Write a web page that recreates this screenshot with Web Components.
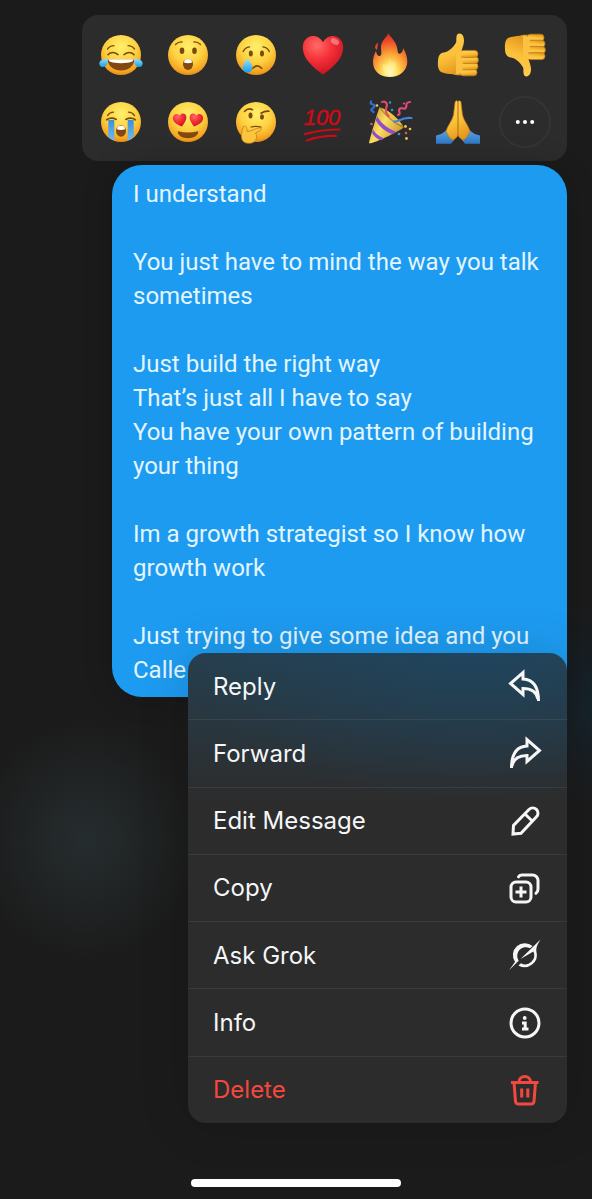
<!DOCTYPE html>
<html lang="en">
<head>
<meta charset="utf-8">
<meta name="viewport" content="width=device-width, initial-scale=1">
<title>Message actions</title>
<style>
	html {
		background: #1b1b1b;
	}

	body {
		margin: 0;
	}
</style>
</head>
<body>

<message-screen>
	<reaction-bar slot="reactions">
		<reaction-button name="joy" label="Tears of joy"></reaction-button>
		<reaction-button name="wow" label="Astonished"></reaction-button>
		<reaction-button name="cry" label="Crying"></reaction-button>
		<reaction-button name="heart" label="Heart"></reaction-button>
		<reaction-button name="fire" label="Fire"></reaction-button>
		<reaction-button name="up" label="Thumbs up"></reaction-button>
		<reaction-button name="down" label="Thumbs down"></reaction-button>
		<reaction-button name="sob" label="Sobbing"></reaction-button>
		<reaction-button name="love" label="Heart eyes"></reaction-button>
		<reaction-button name="think" label="Thinking"></reaction-button>
		<reaction-button name="hundred" label="Hundred points"></reaction-button>
		<reaction-button name="party" label="Party popper"></reaction-button>
		<reaction-button name="pray" label="Folded hands"></reaction-button>
		<reaction-button name="more" label="More reactions"></reaction-button>
	</reaction-bar>

	<message-bubble>
		<p>I understand</p>
		<p>You just have to mind the way you talk sometimes</p>
		<p>Just build the right way<br>That’s just all I have to say<br>You have your own pattern of building your thing</p>
		<p>Im a growth strategist so I know how growth work</p>
		<p>Just trying to give some idea and you<br>Calle</p>
	</message-bubble>

	<action-menu slot="menu">
		<action-item icon="reply">Reply</action-item>
		<action-item icon="forward">Forward</action-item>
		<action-item icon="edit">Edit Message</action-item>
		<action-item icon="copy">Copy</action-item>
		<action-item icon="grok">Ask Grok</action-item>
		<action-item icon="info">Info</action-item>
		<action-item icon="trash" danger>Delete</action-item>
	</action-menu>
</message-screen>

<script>
/* every emoji is drawn on a 44 x 44 grid */
const defs = `
	<defs>
		<radialGradient id="face" cx=".5" cy=".3" r=".72">
			<stop offset="0" stop-color="#fff06c"/>
			<stop offset=".55" stop-color="#fdd03f"/>
			<stop offset=".85" stop-color="#f5a623"/>
			<stop offset="1" stop-color="#e08a16"/>
		</radialGradient>
		<linearGradient id="tear" x1="0" y1="0" x2="0" y2="1">
			<stop offset="0" stop-color="#9be4ff"/>
			<stop offset="1" stop-color="#1e9be2"/>
		</linearGradient>
		<linearGradient id="stream" x1="0" y1="0" x2="0" y2="1">
			<stop offset="0" stop-color="#3a8fda"/>
			<stop offset="1" stop-color="#6cbcf5"/>
		</linearGradient>
		<radialGradient id="heart" cx=".35" cy=".25" r=".8">
			<stop offset="0" stop-color="#ff6b66"/>
			<stop offset=".45" stop-color="#f5333a"/>
			<stop offset="1" stop-color="#c8101f"/>
		</radialGradient>
		<radialGradient id="flame" cx=".5" cy=".9" r=".85">
			<stop offset="0" stop-color="#fffbd0"/>
			<stop offset=".25" stop-color="#ffe160"/>
			<stop offset=".55" stop-color="#fb9a33"/>
			<stop offset=".85" stop-color="#ee4b2b"/>
			<stop offset="1" stop-color="#e23425"/>
		</radialGradient>
		<linearGradient id="skin" x1="0" y1="0" x2=".3" y2="1">
			<stop offset="0" stop-color="#ffd357"/>
			<stop offset=".6" stop-color="#fbc039"/>
			<stop offset="1" stop-color="#e79a20"/>
		</linearGradient>
		<linearGradient id="cone" x1="0" y1="0" x2="1" y2=".6">
			<stop offset="0" stop-color="#b98a22"/>
			<stop offset=".5" stop-color="#ffdf66"/>
			<stop offset="1" stop-color="#c9962b"/>
		</linearGradient>
		<linearGradient id="sleeve" x1="0" y1="0" x2="0" y2="1">
			<stop offset="0" stop-color="#5aa2e4"/>
			<stop offset="1" stop-color="#2f78c4"/>
		</linearGradient>
	</defs>`;

const face = '<circle cx="22" cy="22" r="20" fill="url(#face)"/>';

const brown = 'fill="none" stroke="#7a4a0c" stroke-linecap="round"';

const hand = `
	<path fill="url(#skin)" d="M8 19.5C13 18.5 18 14 20.3 9 20.5 5 20 1 23 .6 26.6 .4 28 4 28 8 28 12 26 15 25.5 18.5L31 40C28 42.6 21 43 17 41.3 13 40.6 9 41 5 39 2 37 1.6 32 2 28 2 23 4 20 8 19.5Z"/>
	<g fill="url(#skin)" stroke="#b9791b" stroke-width=".8">
		<rect x="24" y="36" width="17" height="6.8" rx="3.4"/>
		<rect x="24" y="29.8" width="18" height="7" rx="3.5"/>
		<rect x="24" y="23.6" width="18.4" height="7" rx="3.5"/>
		<rect x="24" y="17.4" width="18" height="7" rx="3.5"/>
	</g>
	<path fill="#fac240" d="M20 18h7c-2 4-2 8 0 11-1 4-1 8 1 11l-8 1z"/>`;

const emoji = {
	joy: `${face}
		<path ${brown} stroke-width="1.6" d="M9 21.6q4.5-4.2 10 0M25 21.6q5.5-4.2 10 0"/>
		<path ${brown} stroke-width="1.3" d="M8.5 16q2.5-3.4 6.5-3.4M35.5 16q-2.5-3.4-6.5-3.4"/>
		<path fill="#83480f" d="M8.7 26.3h26.6c0 7-6 11.2-13.3 11.2S8.7 33.3 8.7 26.3z"/>
		<path fill="#fff" d="M9.5 26.3h25c.3 2.3-3 3.9-12.5 3.9S9.2 28.6 9.5 26.3z"/>
		<path fill="url(#tear)" d="M8.8 25c.8 4.5-.8 8.5-4.5 9-3.4.3-4.6-2.6-3.6-5 1.3-2.7 5-2.3 8.1-4z"/>
		<path fill="url(#tear)" d="M35.2 25c-.8 4.5.8 8.5 4.5 9 3.4.3 4.6-2.6 3.6-5-1.3-2.7-5-2.3-8.1-4z"/>`,
	wow: `${face}
		<ellipse cx="16" cy="17.8" rx="2.3" ry="3.3" fill="#7a4a0c"/>
		<ellipse cx="28.5" cy="17.8" rx="2.3" ry="3.3" fill="#7a4a0c"/>
		<path ${brown} stroke-width="1.3" d="M9.5 11.5q3-2.8 6.5-2.5M34.5 11.5q-3-2.8-6.5-2.5"/>
		<ellipse cx="22" cy="31.3" rx="5" ry="5.6" fill="#83480f"/>
		<path fill="#fff" d="M18 29.5q0-3.4 4-3.4t4 3.4q-4 1.6-8 0z"/>`,
	cry: `${face}
		<ellipse cx="16.8" cy="20.6" rx="2" ry="3" fill="#7a4a0c"/>
		<ellipse cx="28" cy="20.6" rx="2" ry="3" fill="#7a4a0c"/>
		<path ${brown} stroke-width="1.4" d="M9.2 18.5q2-4.2 6.3-4.6M35.3 18.5q-2-4.2-6.3-4.6"/>
		<path ${brown} stroke-width="1.7" d="M18.8 35.3q4.4-4.8 8.8 0"/>
		<path fill="url(#tear)" d="M13.5 25c2 3.7 5 6 5 9.6a5 5 0 0 1-10 0c0-3.6 3.4-6 5-9.6z"/>`,
	heart: `
		<path fill="url(#heart)" d="M22 41.5C12 34.5 1.8 25.8 1.8 14.5 1.8 7.5 6.5 3 12 3c4.5 0 8 2.6 10 6.2C24 5.6 27.5 3 32 3c5.5 0 10.2 4.5 10.2 11.5C42.2 25.8 32 34.5 22 41.5z"/>
		<ellipse cx="34" cy="8.5" rx="4.5" ry="2.8" fill="#fff" opacity=".35" transform="rotate(30 34 8.5)"/>`,
	fire: `
		<path fill="url(#flame)" d="M20.3 .5C23 5 29 9 29.5 17c.2 3.5 1.5 4.2 2.8 3.4 2-1.2 2.9-3 2.7-5.4C38 19 39.3 24 39.3 29 39 38 31 44 22 44 12 44 5 38 5 29c0-4 1-8 3-11 .4 3 1.8 5.2 3.7 5 2.6-.6 1.3-5 1.3-9C13 8 18 5 20.3 .5z"/>
		<path fill="#e8432a" d="M10.3 9.5c-3.8 2.5-4 5.5-1.6 7.5 1.5-2 .4-4.5 1.6-7.5z"/>
		<path fill="#fff6a8" opacity=".4" d="M22 25c1 5 3 5 5 3 2 6 1 14-5 14s-9-5-7-11c2 2 6-1 7-6z"/>`,
	up: hand,
	down: `<g transform="matrix(1 0 0 -1 0 44)">${hand}</g>`,
	sob: `${face}
		<path fill="url(#stream)" d="M9.3 20h6v20.5q-3.5-1.3-6-3.8zM28.7 20h6v16.7q-2.5 2.5-6 3.8z"/>
		<path ${brown} stroke-width="1.7" d="M7.6 19.8q4.6-3 9.6-.4M26.8 19.4q5-2.6 9.6.4"/>
		<path ${brown} stroke-width="1.3" d="M8.5 15.6q2.3-3.3 6-3.4M35.5 15.6q-2.3-3.3-6-3.4"/>
		<ellipse cx="22" cy="31" rx="5" ry="5.8" fill="#83480f"/>
		<path fill="#fff" d="M18 29.2q0-3.4 4-3.4t4 3.4q-4 1.6-8 0z"/>`,
	love: `${face}
		<path fill="url(#heart)" d="M16 26.5C10.5 24.5 6 21.5 7 17c.9-3.6 5-3.8 6.7-1.2 1-3 5.6-3.3 6.5.2.8 4-2 7-4.2 10.5z"/>
		<path fill="url(#heart)" d="M28 26.5c5.5-2 10-5 9-9.5-.9-3.6-5-3.8-6.7-1.2-1-3-5.6-3.3-6.5.2-.8 4 2 7 4.2 10.5z"/>
		<path fill="#83480f" d="M11.8 31.3q10.2 2.6 20.4 0c.7 3.7-4.2 7-10.2 7s-10.9-3.3-10.2-7z"/>`,
	think: `${face}
		<ellipse cx="16.5" cy="15.5" rx="2" ry="2.9" fill="#7a4a0c"/>
		<ellipse cx="28" cy="17" rx="2" ry="2.7" fill="#7a4a0c"/>
		<path ${brown} stroke-width="1.6" d="M10.5 11.5q3.5-4 8-1.8M27 13.2q4-2.4 8-2"/>
		<path ${brown} stroke-width="1.3" d="M17 27q5-1.5 10 .2"/>
		<path fill="#fbc53f" stroke="#c57f18" stroke-width=".8" d="M9.5 26.5c1.5-1 3 0 3.2 2l.6 3c4-.3 8-3.2 12.4-3.7 2.2 0 2.3 2 .3 2.9l-4.5 2.3c2.5 3 1 9.5-5 10.2-5.5.5-8.7-1.7-9-6-.2-4 .6-7.5 2-10.7z"/>`,
	hundred: `
		<text x="21" y="25" text-anchor="middle" font-family="Liberation Sans, sans-serif" font-size="22" font-style="italic" fill="#cf0a14" stroke="#cf0a14" stroke-width=".5">100</text>
		<path fill="none" stroke="#cf0a14" stroke-width="2.2" stroke-linecap="round" d="M4 34q17-4.5 34.5-4.5M6 40.5q14-5 29-4.5"/>`,
	party: `
		<path fill="url(#cone)" d="M1 43.2C.5 42.5 10.5 9 11.5 7.5c5-1 24 15 24 20C34.5 29.5 3.5 45 1 43.2z"/>
		<path fill="#8e4fc9" d="M9 16.5q7 11 19.5 15.5l-4 2.3Q13 30 7.8 20.5zM5 29.5q4 6.5 11.5 9l-3.5 1.7Q6.5 38 4 33z"/>
		<path fill="#8a6312" opacity=".6" d="M11.5 7.5c5-1 24 15 24 20-7-2-20-12-24-20z"/>
		<path fill="#f5cf55" opacity=".8" d="M13.5 8.5c5 0 18 11 20.5 17-7-3-16-10-20.5-17z"/>
		<g fill="none" stroke-linecap="round" stroke-width="2.2">
			<path stroke="#2f6fd0" d="M3 1.5c-2 4 5 2 3.5 5s-6 2-1 5.5"/>
			<path stroke="#e0485f" d="M14 2c3-1 6 1 4.5 5s-1 6 2 9"/>
			<path stroke="#e04a78" d="M30 15c4-1-1-5 2-6.5s5 2 6-1-1-5 4-5.5"/>
			<path stroke="#3f84e0" d="M26 21.5c4 1 8-5 17.5-3.5"/>
		</g>
		<g fill="#e7516b"><circle cx="3.5" cy="24" r="1.3"/><circle cx="36" cy="3.5" r="1.1"/><circle cx="38" cy="33" r="1.3"/></g>
		<g fill="#f3c64b"><circle cx="9" cy="5.5" r="1.3"/><circle cx="37.5" cy="26.5" r="1.4"/><circle cx="42" cy="29" r="1.3"/><circle cx="38.5" cy="38.5" r="1.4"/></g>
		<g fill="#3f8ee0"><circle cx="22" cy="2.5" r="1.2"/><circle cx="24" cy="10" r="1.3"/><circle cx="31" cy="34" r="1.3"/></g>`,
	pray: `
		<path fill="url(#sleeve)" d="M0 35.5Q6 34.5 10.5 30L18 40l-3 3.7H0zM44 35.5Q38 34.5 33.5 30L26 40l3 3.7h15z"/>
		<path fill="url(#skin)" stroke="#b87616" stroke-width=".7" d="M22 2C21.5.3 19.3.3 19 2.5L17.5 15C16 21 12 25 10 31q2 6.5 7 9.3C19 38.5 21 38 22 35zM22 2C22.5.3 24.7.3 25 2.5L26.5 15C28 21 32 25 34 31q-2 6.5-7 9.3C25 38.5 23 38 22 35z"/>`,
	more: `
		<g fill="#fff"><circle cx="14.8" cy="22" r="2"/><circle cx="22" cy="22" r="2"/><circle cx="29.2" cy="22" r="2"/></g>`
};

/* menu icons, 36 x 36 grid */
const icons = {
	reply: '<path d="M31.5 33C31.5 19 26 11.5 16 11V4.5L3.5 15.5 16 26.5V20.5C24.5 20.5 29.5 23.5 31 31"/>',
	forward: '<path d="M4.5 33C4.5 19 10 11.5 20 11V4.5L32.5 15.5 20 26.5V20.5C11.5 20.5 6.5 23.5 5 31"/>',
	edit: '<path d="M6 31l.5-8.5L22 6.5a5.2 5.2 0 0 1 7.5 7.3L14 30.2zM18 11l7.5 7.3"/>',
	copy: '<rect x="4" y="12" width="20" height="20" rx="5"/><path stroke-linecap="round" d="M11.5 6.8C12.3 5.6 13.6 5 15 5h10.5A5.5 5.5 0 0 1 31 10.5V19c0 1.8-.8 3.5-2 4.3"/><path d="M14 16.5v11M8.5 22h11"/>',
	grok: '<g fill="currentColor" stroke="none"><path d="M25.6 9A12 12 0 0 0 8 25L2 33.2l9.7-9.4A8.7 8.7 0 0 1 23 11.2z"/><path d="M33.5 2.5L13.5 22 26.4 14.500A9 9 0 0 1 14 26.200L11.400 28.400A12.200 12.200 0 0 0 29.400 14.600C29 11 30 8 33.500 2.500z"/></g>',
	info: '<circle cx="18" cy="18" r="14"/><path d="M15 18h3.2v6.5M15 24h6.5"/><circle cx="17.7" cy="13" r="1.9" fill="currentColor" stroke="none"/>',
	trash: '<path d="M4 10.5h27.5M12 10C12 2.5 23.5 2.5 23.5 10M7 10.5l1.5 18.8Q8.8 32 11.5 32H24q2.7 0 3-2.7l1.5-18.8M14.7 16.5v9M20.8 16.5v9"/>'
};

class MessageScreen extends HTMLElement {
	constructor() {
		super();
		this.attachShadow({mode: 'open'});
		this.shadowRoot.innerHTML = `
			<style>
			:host {
				background:
					radial-gradient(ellipse 110px 120px at 85px 840px, #262d2f, transparent),
					radial-gradient(ellipse 50px 100px at 100% 705px, #15232c, transparent),
					#1b1b1b;
				box-sizing: border-box;
				display: flex;
				flex-direction: column;
				font-family: Roboto, "Liberation Sans", sans-serif;
				gap: 4px;
				min-height: 100vh;
				padding: 15px 25px 12px;
			}

			main {
				display: flex;
				flex-direction: column;
				margin-left: 87px;
			}

			.reactions {
				margin-left: 57px;
			}

			/* the menu rides up over the end of the bubble */
			.menu {
				margin: -44px 0 0 76px;
				position: relative;
			}

			.home {
				align-self: center;
				background: #fff;
				border-radius: 4px;
				height: 8px;
				margin-top: auto;
				width: 210px;
			}
			</style>
			<div class="reactions"><slot name="reactions"></slot></div>
			<main>
				<slot></slot>
				<div class="menu"><slot name="menu"></slot></div>
			</main>
			<div class="home"></div>
		`;
	}
}

class ReactionBar extends HTMLElement {
	constructor() {
		super();
		this.attachShadow({mode: 'open'});
		this.shadowRoot.innerHTML = `
			<style>
			:host {
				background: #2c2c2d;
				border-radius: 16px;
				display: grid;
				grid-template-columns: repeat(7, 52px);
				justify-content: space-between;
				padding: 14px 16px 13px 13px;
				row-gap: 15px;
			}
			</style>
			<slot></slot>
		`;
	}
}

class ReactionButton extends HTMLElement {
	constructor() {
		super();
		this.attachShadow({mode: 'open'});
	}

	connectedCallback() {
		const name = this.getAttribute('name');
		this.shadowRoot.innerHTML = `
			<style>
			:host {
				display: block;
			}

			button {
				align-items: center;
				background: none;
				border: 0;
				border-radius: 50%;
				box-sizing: border-box;
				display: flex;
				height: 52px;
				justify-content: center;
				padding: 0;
				width: 52px;
			}

			button.more {
				border: 2px solid #343435;
			}

			svg {
				flex: none;
				height: 44px;
				overflow: visible;
				width: 44px;
			}
			</style>
			<button type="button" class="${name}" aria-label="${this.getAttribute('label')}">
				<svg viewBox="0 0 44 44" aria-hidden="true">${defs}${emoji[name]}</svg>
			</button>
		`;
	}
}

class MessageBubble extends HTMLElement {
	constructor() {
		super();
		this.attachShadow({mode: 'open'});
		this.shadowRoot.innerHTML = `
			<style>
			:host {
				background: #1d9bf0;
				border-radius: 30px;
				box-shadow: 0 0 30px rgba(0, 0, 0, .2);
				color: #e3f5ff;
				display: flex;
				flex-direction: column;
				font-size: 24px;
				gap: 34px;
				line-height: 34px;
				padding: 12px 21px 10px;
			}

			::slotted(p) {
				margin: 0;
			}
			</style>
			<slot></slot>
		`;
	}
}

class ActionMenu extends HTMLElement {
	constructor() {
		super();
		this.attachShadow({mode: 'open'});
		this.shadowRoot.innerHTML = `
			<style>
			:host {
				background:
					radial-gradient(ellipse 300px 150px at 75% 0, rgba(25, 75, 110, .5), transparent),
					linear-gradient(rgba(35, 75, 100, .6), transparent 150px),
					#2c2c2c;
				border-radius: 18px;
				box-shadow: 0 0 50px rgba(0, 0, 0, .15);
				display: flex;
				flex-direction: column;
				font-family: Inter, "Liberation Sans", sans-serif;
				font-size: 24px;
				min-height: 470px;
				overflow: hidden;
			}
			</style>
			<slot></slot>
		`;
	}
}

class ActionItem extends HTMLElement {
	constructor() {
		super();
		this.attachShadow({mode: 'open'});
	}

	connectedCallback() {
		this.shadowRoot.innerHTML = `
			<style>
			:host {
				color: #f5f6f7;
				display: flex;
				flex: 1;
			}

			:host([danger]) {
				color: #f4483f;
			}

			:host(:not(:first-child)) {
				border-top: 1px solid rgba(255, 255, 255, .07);
			}

			button {
				align-items: center;
				background: none;
				border: 0;
				color: inherit;
				display: flex;
				flex: 1;
				font: inherit;
				justify-content: space-between;
				padding: 15px 24px 15px 25px;
			}

			svg {
				fill: none;
				height: 36px;
				stroke: currentColor;
				stroke-width: 3;
				width: 36px;
			}
			</style>
			<button type="button">
				<slot></slot>
				<svg viewBox="0 0 36 36" aria-hidden="true">${icons[this.getAttribute('icon')]}</svg>
			</button>
		`;
	}
}

customElements.define('message-screen', MessageScreen);
customElements.define('reaction-bar', ReactionBar);
customElements.define('reaction-button', ReactionButton);
customElements.define('message-bubble', MessageBubble);
customElements.define('action-menu', ActionMenu);
customElements.define('action-item', ActionItem);
</script>
</body>
</html>
